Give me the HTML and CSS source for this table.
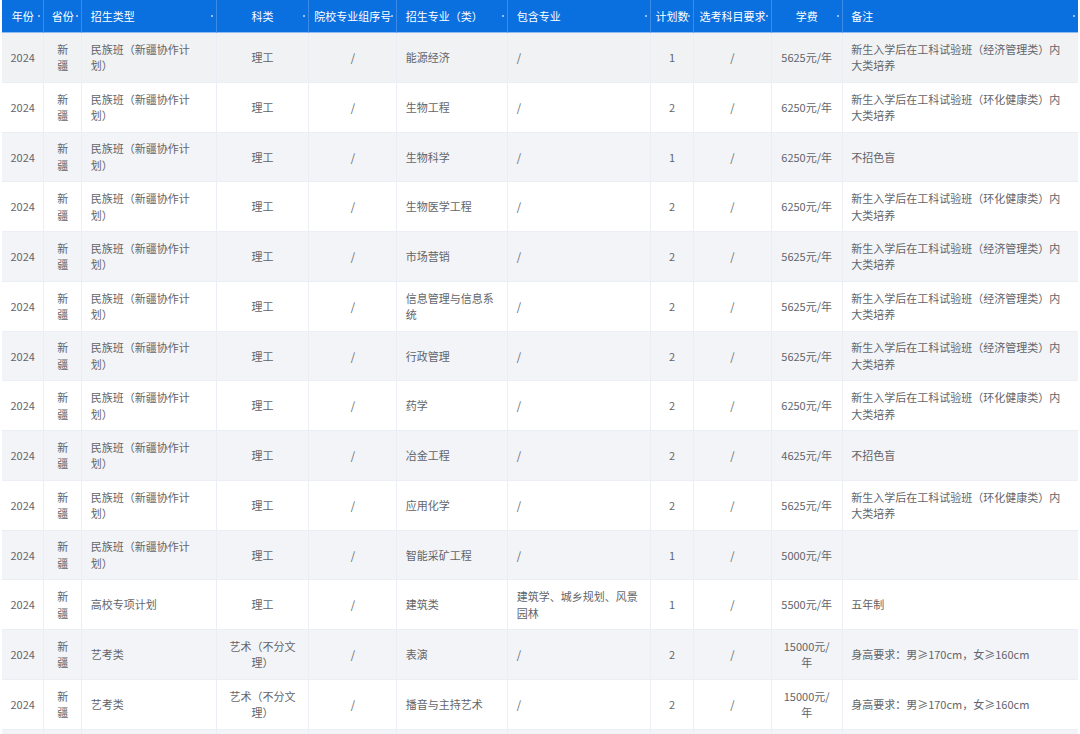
FILE: index.html
```html
<!DOCTYPE html>
<html lang="zh-CN">
<head>
<meta charset="utf-8">
<title>招生计划</title>
<link rel="stylesheet" href="styles.css">
</head>
<body>
<table class="plan">
  <colgroup>
    <col style="width:42.3px"><col style="width:38px"><col style="width:134.4px"><col style="width:92.6px"><col style="width:88px"><col style="width:111px"><col style="width:142.7px"><col style="width:43.3px"><col style="width:77.4px"><col style="width:71px"><col style="width:235.3px">
  </colgroup>
  <thead>
    <tr>
      <th class="c">年份</th><th class="c">省份</th><th class="l">招生类型</th><th class="c">科类</th><th class="c">院校专业组序号</th><th class="l">招生专业（类）</th><th class="l">包含专业</th><th class="c">计划数</th><th class="c">选考科目要求</th><th class="c">学费</th><th class="l">备注</th>
    </tr>
  </thead>
  <tbody>
    <tr><td class="c">2024</td><td class="c">新疆</td><td>民族班（新疆协作计划）</td><td class="c">理工</td><td class="c">/</td><td>能源经济</td><td>/</td><td class="c">1</td><td class="c">/</td><td class="c">5625元/年</td><td>新生入学后在工科试验班（经济管理类）内大类培养</td></tr>
    <tr><td class="c">2024</td><td class="c">新疆</td><td>民族班（新疆协作计划）</td><td class="c">理工</td><td class="c">/</td><td>生物工程</td><td>/</td><td class="c">2</td><td class="c">/</td><td class="c">6250元/年</td><td>新生入学后在工科试验班（环化健康类）内大类培养</td></tr>
    <tr><td class="c">2024</td><td class="c">新疆</td><td>民族班（新疆协作计划）</td><td class="c">理工</td><td class="c">/</td><td>生物科学</td><td>/</td><td class="c">1</td><td class="c">/</td><td class="c">6250元/年</td><td>不招色盲</td></tr>
    <tr><td class="c">2024</td><td class="c">新疆</td><td>民族班（新疆协作计划）</td><td class="c">理工</td><td class="c">/</td><td>生物医学工程</td><td>/</td><td class="c">2</td><td class="c">/</td><td class="c">6250元/年</td><td>新生入学后在工科试验班（环化健康类）内大类培养</td></tr>
    <tr><td class="c">2024</td><td class="c">新疆</td><td>民族班（新疆协作计划）</td><td class="c">理工</td><td class="c">/</td><td>市场营销</td><td>/</td><td class="c">2</td><td class="c">/</td><td class="c">5625元/年</td><td>新生入学后在工科试验班（经济管理类）内大类培养</td></tr>
    <tr><td class="c">2024</td><td class="c">新疆</td><td>民族班（新疆协作计划）</td><td class="c">理工</td><td class="c">/</td><td>信息管理与信息系统</td><td>/</td><td class="c">2</td><td class="c">/</td><td class="c">5625元/年</td><td>新生入学后在工科试验班（经济管理类）内大类培养</td></tr>
    <tr><td class="c">2024</td><td class="c">新疆</td><td>民族班（新疆协作计划）</td><td class="c">理工</td><td class="c">/</td><td>行政管理</td><td>/</td><td class="c">2</td><td class="c">/</td><td class="c">5625元/年</td><td>新生入学后在工科试验班（经济管理类）内大类培养</td></tr>
    <tr><td class="c">2024</td><td class="c">新疆</td><td>民族班（新疆协作计划）</td><td class="c">理工</td><td class="c">/</td><td>药学</td><td>/</td><td class="c">2</td><td class="c">/</td><td class="c">6250元/年</td><td>新生入学后在工科试验班（环化健康类）内大类培养</td></tr>
    <tr><td class="c">2024</td><td class="c">新疆</td><td>民族班（新疆协作计划）</td><td class="c">理工</td><td class="c">/</td><td>冶金工程</td><td>/</td><td class="c">2</td><td class="c">/</td><td class="c">4625元/年</td><td>不招色盲</td></tr>
    <tr><td class="c">2024</td><td class="c">新疆</td><td>民族班（新疆协作计划）</td><td class="c">理工</td><td class="c">/</td><td>应用化学</td><td>/</td><td class="c">2</td><td class="c">/</td><td class="c">5625元/年</td><td>新生入学后在工科试验班（环化健康类）内大类培养</td></tr>
    <tr><td class="c">2024</td><td class="c">新疆</td><td>民族班（新疆协作计划）</td><td class="c">理工</td><td class="c">/</td><td>智能采矿工程</td><td>/</td><td class="c">1</td><td class="c">/</td><td class="c">5000元/年</td><td></td></tr>
    <tr><td class="c">2024</td><td class="c">新疆</td><td>高校专项计划</td><td class="c">理工</td><td class="c">/</td><td>建筑类</td><td>建筑学、城乡规划、风景园林</td><td class="c">1</td><td class="c">/</td><td class="c">5500元/年</td><td>五年制</td></tr>
    <tr><td class="c">2024</td><td class="c">新疆</td><td>艺考类</td><td class="c">艺术（不分文理）</td><td class="c">/</td><td>表演</td><td>/</td><td class="c">2</td><td class="c">/</td><td class="c">15000元/年</td><td>身高要求：男≥170cm，女≥160cm</td></tr>
    <tr><td class="c">2024</td><td class="c">新疆</td><td>艺考类</td><td class="c">艺术（不分文理）</td><td class="c">/</td><td>播音与主持艺术</td><td>/</td><td class="c">2</td><td class="c">/</td><td class="c">15000元/年</td><td>身高要求：男≥170cm，女≥160cm</td></tr>
    <tr class="tail"><td></td><td></td><td></td><td></td><td></td><td></td><td></td><td></td><td></td><td></td><td></td></tr>
  </tbody>
</table>
</body>
</html>
```

FILE: styles.css
```css
html, body {
  margin: 0;
  padding: 0;
  background: #ffffff;
}

body {
  padding-left: 2px;
  overflow: hidden;
  height: 734px;
}

.plan {
  table-layout: fixed;
  width: 1076px;
  border-collapse: separate;
  border-spacing: 0;
  font-family: "Noto Sans CJK SC", "Noto Sans", sans-serif;
  font-size: 11px;
  line-height: 16.6px;
  color: #62656b;
  text-spacing-trim: space-all;
}

.plan thead tr {
  height: 33px;
}

.plan th {
  position: relative;
  background: #0a6fdf;
  color: #ffffff;
  font-weight: normal;
  white-space: nowrap;
  padding: 0 4px;
  border-right: 1px solid #3a8ae6;
  border-bottom: 1px solid #8fbcf0;
  box-sizing: border-box;
}

.plan th:last-child {
  border-right: none;
}

.plan th::after {
  content: "";
  position: absolute;
  right: 3px;
  top: 15px;
  width: 2px;
  height: 2px;
  border-radius: 1px;
  background: rgba(255, 255, 255, 0.75);
}

.plan th.l {
  text-align: left;
  padding-left: 8.5px;
}

.plan th.c {
  text-align: center;
}

.plan tbody tr {
  height: 49.75px;
}

.plan tbody tr:nth-child(odd) {
  background: #f3f4f7;
}

.plan tbody tr:first-child {
  background: #f1f2f4;
}

.plan tbody tr:nth-child(even) {
  background: #ffffff;
}

.plan td {
  padding: 0 8.5px;
  text-align: left;
  vertical-align: middle;
  border-right: 1px solid #ebeef5;
  border-bottom: 1px solid #ebeef5;
  box-sizing: border-box;
}

.plan td:last-child {
  border-right: none;
}

.plan td.c {
  text-align: center;
}
```
